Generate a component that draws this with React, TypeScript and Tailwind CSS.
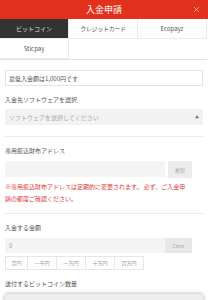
import { X } from 'lucide-react';

const tabs = ['ビットコイン', 'クレジットカード', 'Ecopayz', 'Stlcpay'];
const amounts = ['百円', '一千円', '一万円', '十万円', '百万円'];

export default function App() {
  return (
    <div className="w-[208px] h-[300px] overflow-hidden bg-white text-[#555] font-['Noto_Sans_CJK_JP','Noto_Sans',sans-serif]">
      {/* header */}
      <div className="h-[19px] bg-[#e2311d] grid grid-cols-[24px_1fr_24px] items-center">
        <div />
        <div className="text-center text-white text-[9px] leading-none">入金申請</div>
        <div className="flex justify-center">
          <X size={9} color="#fbd3cc" strokeWidth={1.75} />
        </div>
      </div>

      {/* tabs */}
      <div className="grid grid-cols-3 w-[207px] border-b border-[#e2e2e2]">
        {tabs.map((t, i) => (
          <div
            key={t}
            className={`h-[20px] flex items-center justify-center text-[6px] leading-none border-r border-b border-[#ececec] ${
              i === 0 ? 'bg-[#333] text-[#ddd]' : 'bg-white text-[#555]'
            } ${i === 1 ? 'text-[5px] tracking-tighter' : ''}`}
          >
            {t}
          </div>
        ))}
      </div>

      <div className="px-[5px] pt-[10px]">
        <div className="h-[16px] border border-[#e4e4e4] flex items-center px-[3px] text-[6px] text-[#555]">
          最低入金額は1,000円です
        </div>

        <div className="mt-[11px] text-[6px] leading-none text-[#555]">入金先ソフトウェアを選択</div>
        <div className="mt-[6px] h-[16px] bg-[#f2f2f2] flex items-center justify-between px-[4px] text-[6px] text-[#aaa]">
          <span>ソフトウェアを選択してください</span>
          <span className="text-[4px] text-[#777]">▲</span>
        </div>

        <div className="mt-[11px] border-t border-[#eaeaea]" />

        <div className="mt-[11px] text-[6px] leading-none text-[#555]">専用振込財布アドレス</div>
        <div className="mt-[7px] flex items-stretch h-[16px]">
          <div className="w-[160px] bg-[#f4f4f4]" />
          <div className="ml-[3px] w-[24px] h-[17px] bg-[#ececec] flex items-center justify-center text-[5px] text-[#aaa]">
            複製
          </div>
        </div>
        <div className="mt-[4px] text-[6px] leading-[12px] text-[#e23a3a] whitespace-nowrap">
          ※専用振込財布アドレスは定期的に変更されます。 必ず、ご入金申
          <br />
          請の都度ご確認ください。
        </div>

        <div className="mt-[8px] border-t border-[#eaeaea]" />

        <div className="mt-[11px] text-[6px] leading-none text-[#555]">入金する金額</div>
        <div className="mt-[7px] flex h-[15px]">
          <div className="w-[160px] bg-[#f4f4f4] flex items-center px-[4px] text-[6px] text-[#999]">0</div>
          <div className="w-[27px] bg-[#e8e8e8] flex items-center justify-center text-[5px] text-[#aaa]">Clear</div>
        </div>
        <div className="mt-[3px] flex h-[14px]">
          {amounts.map((a, i) => (
            <div
              key={a}
              className={`${i === 0 ? 'w-[23px] border-l' : 'w-[29px]'} border-t border-b border-r border-[#e6e6e6] flex items-center justify-center text-[5px] text-[#999]`}
            >
              {a}
            </div>
          ))}
        </div>

        <div className="mt-[11px] text-[6px] leading-none text-[#555]">送付するビットコイン数量</div>
        <div className="mt-[7px] h-[16px] bg-[#eee] rounded-[3px] shadow-[0_0_4px_rgba(0,0,0,0.35)]" />
      </div>
    </div>
  );
}
